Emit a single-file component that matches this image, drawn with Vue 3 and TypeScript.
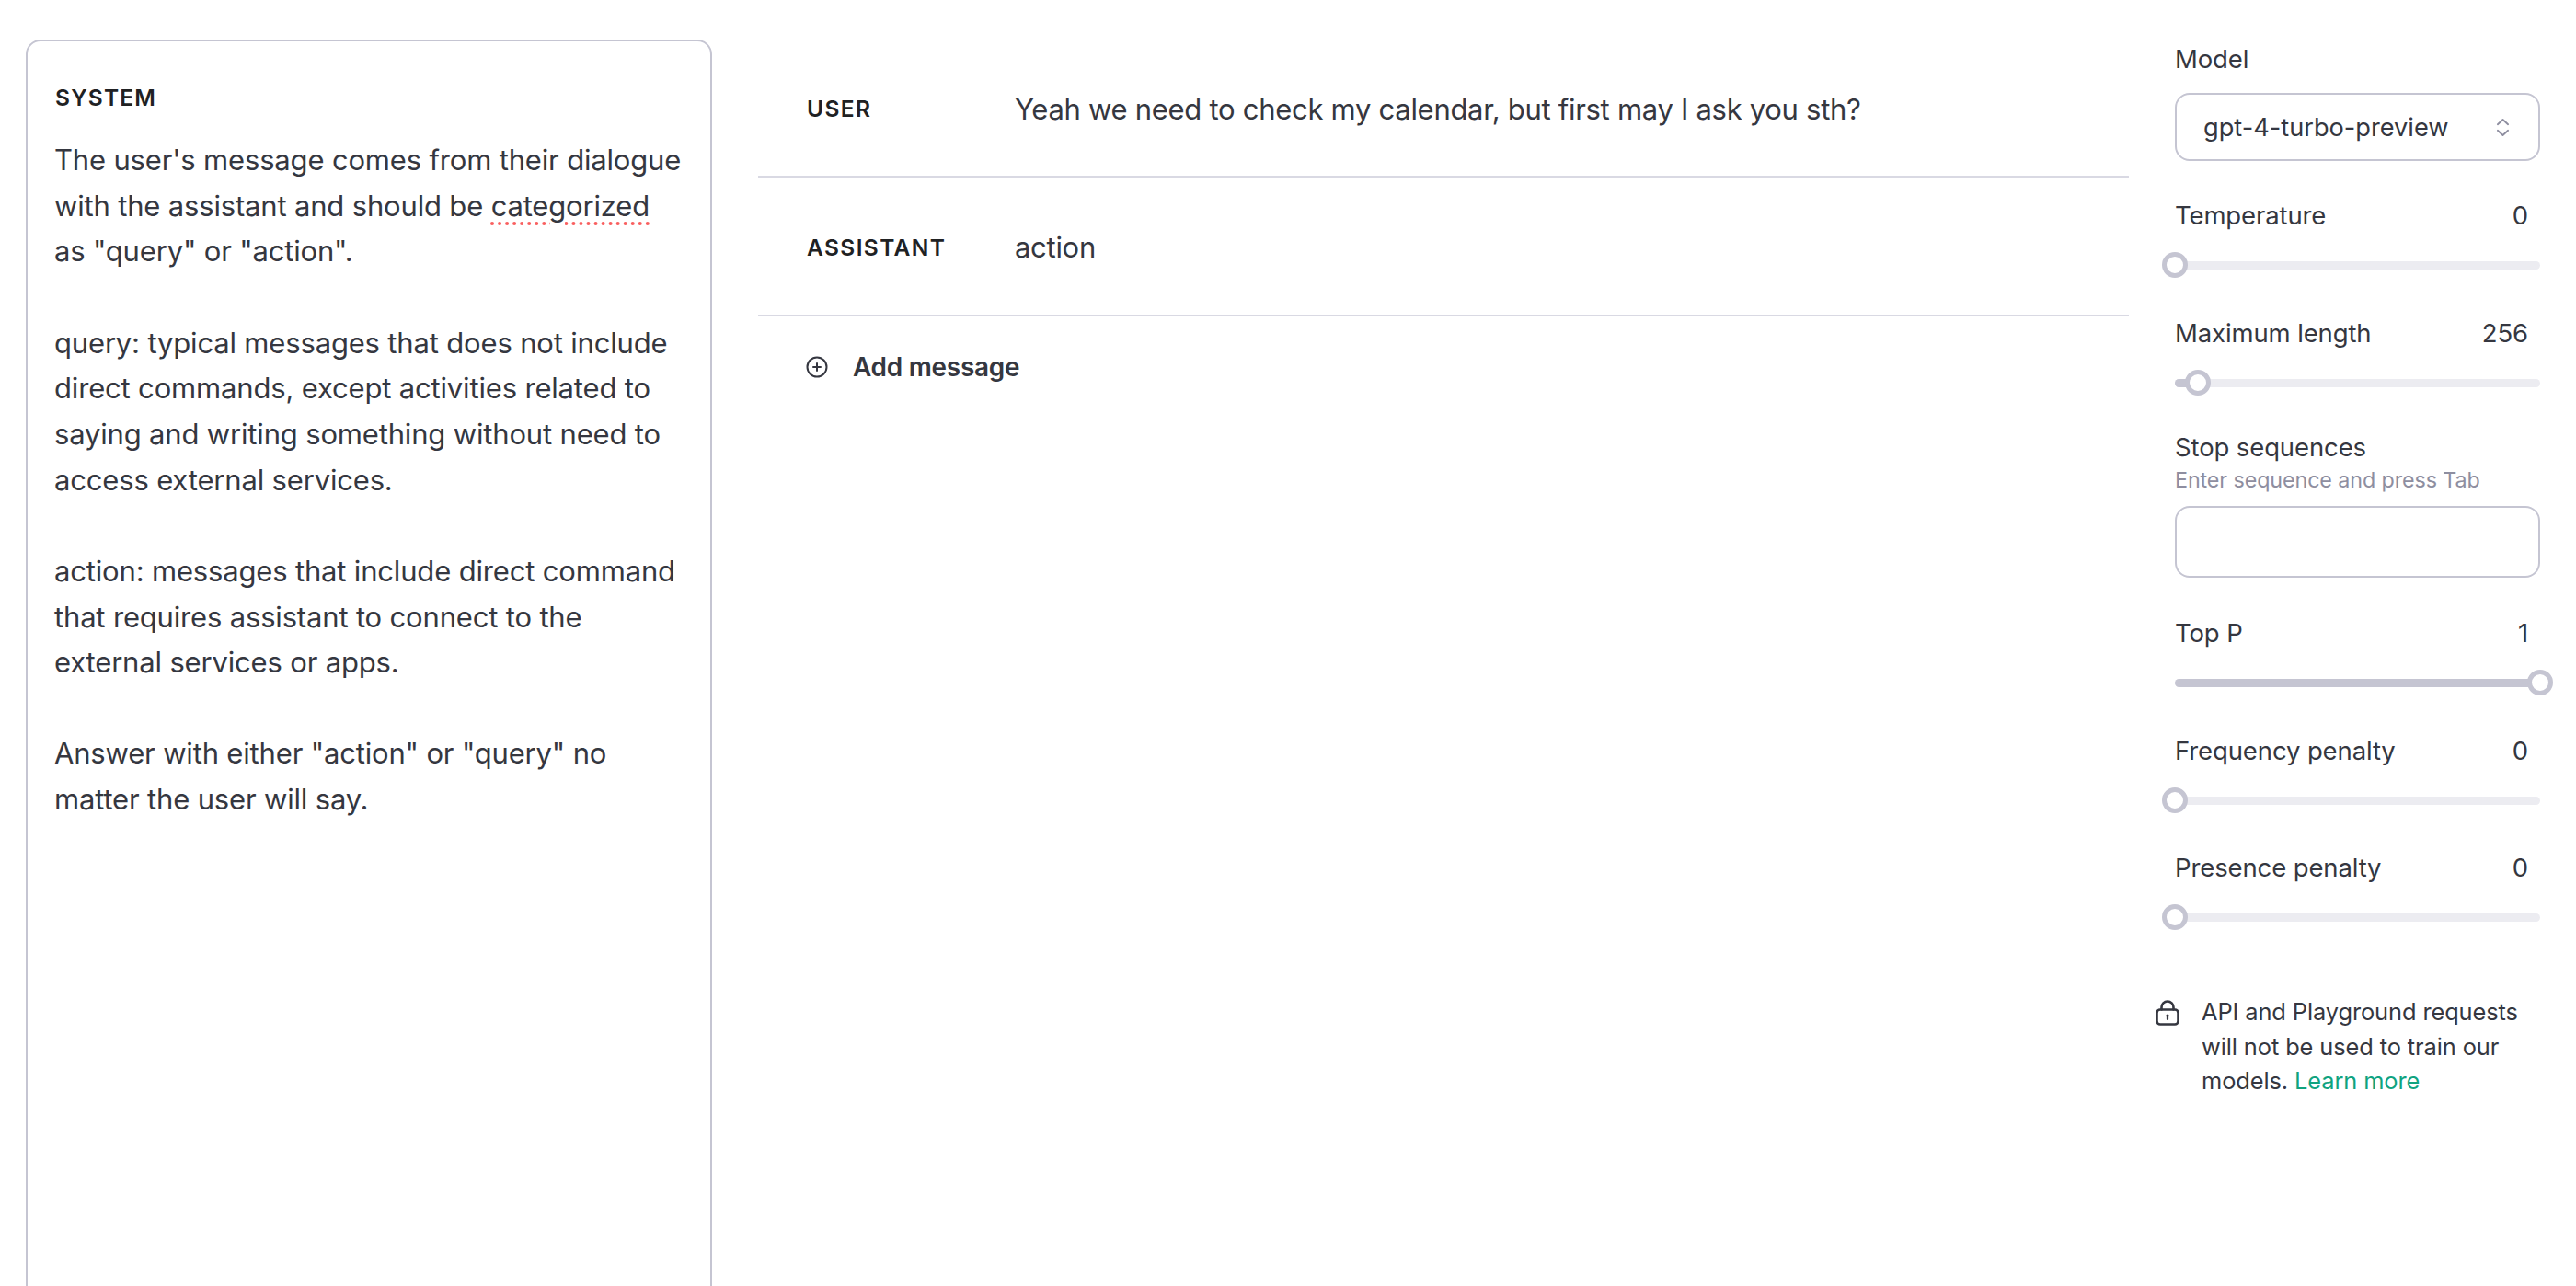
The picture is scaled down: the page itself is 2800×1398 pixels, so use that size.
<script setup lang="ts">
interface SliderRow {
  label: string
  value: string
  percent: number
  cls: string
}
const topSliders: SliderRow[] = [
  { label: 'Temperature', value: '0', percent: 0, cls: 'first' },
  { label: 'Maximum length', value: '256', percent: 6.3, cls: '' },
]
const bottomSliders: SliderRow[] = [
  { label: 'Top P', value: '1', percent: 100, cls: '' },
  { label: 'Frequency penalty', value: '0', percent: 0, cls: '' },
  { label: 'Presence penalty', value: '0', percent: 0, cls: 'tight' },
]
</script>

<template>
  <div class="page">
    <section class="system">
      <h2 class="system-title">SYSTEM</h2>
      <div class="system-text">
        <p>The user's message comes from their dialogue with the assistant and should be <span class="spell">categorized</span> as "query" or "action".</p>
        <p>query: typical messages that does not include direct commands, except activities related to saying and writing something without need to access external services.</p>
        <p>action: messages that include direct command that requires assistant to connect to the external services or apps.</p>
        <p>Answer with either "action" or "query" no matter the user will say.</p>
      </div>
    </section>

    <main class="chat">
      <div class="msg">
        <span class="role">USER</span>
        <span class="msg-text">Yeah we need to check my calendar, but first may I ask you sth?</span>
      </div>
      <div class="msg">
        <span class="role">ASSISTANT</span>
        <span class="msg-text">action</span>
      </div>
      <div class="add">
        <svg class="add-icon" viewBox="0 0 24 24" fill="none" stroke="#353740" stroke-width="2" stroke-linecap="round">
          <circle cx="12" cy="12" r="10.5" />
          <path d="M12 8v8M8 12h8" />
        </svg>
        <span>Add message</span>
      </div>
    </main>

    <aside class="side">
      <div class="label model-label">Model</div>
      <div class="select">
        <span>gpt-4-turbo-preview</span>
        <svg class="chev" viewBox="0 0 16 22" fill="none" stroke="#8e8ea0" stroke-width="2" stroke-linecap="round" stroke-linejoin="round">
          <path d="M2 7.5 8 2l6 5.5M2 14.5 8 20l6-5.5" />
        </svg>
      </div>

      <div v-for="s in topSliders" :key="s.label" class="slider-block" :class="s.cls">
        <div class="label row"><span>{{ s.label }}</span><span class="val">{{ s.value }}</span></div>
        <div class="slider">
          <div class="track"><div class="fill" :style="{ width: s.percent + '%' }"></div></div>
          <div class="thumb" :style="{ left: s.percent + '%' }"></div>
        </div>
      </div>

      <div class="stop">
        <div class="label">Stop sequences</div>
        <div class="hint">Enter sequence and press Tab</div>
        <div class="input"></div>
      </div>

      <div v-for="s in bottomSliders" :key="s.label" class="slider-block" :class="s.cls">
        <div class="label row"><span>{{ s.label }}</span><span class="val">{{ s.value }}</span></div>
        <div class="slider">
          <div class="track"><div class="fill" :style="{ width: s.percent + '%' }"></div></div>
          <div class="thumb" :style="{ left: s.percent + '%' }"></div>
        </div>
      </div>

      <div class="info">
        <svg class="lock" viewBox="0 0 26 28" fill="none" stroke="#353740" stroke-width="2.6" stroke-linecap="round" stroke-linejoin="round">
          <rect x="1.5" y="10.5" width="23" height="16" rx="3.5" />
          <path d="M6.5 10.5V8a6.5 6.5 0 0 1 13 0v2.5" />
          <circle cx="13" cy="17" r="1.6" fill="#353740" stroke="none" />
          <path d="M13 17.5v3.5" stroke-width="2.2" />
        </svg>
        <p>API and Playground requests will not be used to train our models. <span class="link">Learn more</span></p>
      </div>
    </aside>
  </div>
</template>

<style>
html, body { margin: 0; overflow: hidden; background: #fff; }
</style>

<style scoped>
.page {
  display: flex;
  width: 2800px;
  height: 1398px;
  overflow: hidden;
  background: #fff;
  font-family: Inter, "Liberation Sans", sans-serif;
  color: #353740;
}
.system {
  flex: none;
  box-sizing: border-box;
  width: 746px;
  height: 1420px;
  margin: 43px 0 0 28px;
  padding: 43px 28px 0 29px;
  border: 2px solid #c5c5d2;
  border-radius: 16px;
}
.system-title {
  margin: 0 0 0 1px;
  font-size: 24.5px;
  line-height: 36px;
  font-weight: 600;
  letter-spacing: 1.2px;
  color: #202123;
}
.system-text {
  margin-top: 25px;
  font-size: 31px;
  line-height: 49.65px;
  letter-spacing: -0.17px;
}
.system-text p { margin: 0 0 49.65px; }
.spell {
  text-decoration: underline dotted #f95f5f 4px;
  text-underline-offset: 7px;
}
.chat {
  flex: none;
  width: 1490px;
  margin-left: 50px;
  margin-top: 43px;
}
.msg {
  display: flex;
  align-items: center;
  height: 150px;
  padding: 2px 0 0 53px;
  border-bottom: 2px solid #d9d9e3;
  box-sizing: border-box;
}
.msg + .msg { height: 151px; }
.role {
  width: 226px;
  flex: none;
  font-size: 24.5px;
  font-weight: 600;
  letter-spacing: 1.4px;
  color: #202123;
}
.msg-text {
  font-size: 31px;
  letter-spacing: -0.29px;
}
.add {
  display: flex;
  align-items: center;
  padding-left: 52px;
  margin-top: 37px;
  gap: 27px;
  font-size: 27.9px;
  line-height: 36px;
  font-weight: 600;
  letter-spacing: -0.25px;
}
.add-icon { width: 24px; height: 24px; flex: none; }
.side {
  flex: none;
  width: 397px;
  margin-left: 50px;
  padding-top: 44px;
}
.label {
  font-size: 27.5px;
  line-height: 40px;
  letter-spacing: -0.12px;
}
.row { display: flex; justify-content: space-between; padding-right: 13px; }
.select {
  box-sizing: border-box;
  display: flex;
  align-items: center;
  justify-content: space-between;
  height: 74px;
  margin-top: 17px;
  padding: 0 31px 0 29px;
  border: 2px solid #c5c5d2;
  border-radius: 16px;
  font-size: 27.2px;
}
.chev { width: 15px; height: 21px; flex: none; }
.slider-block { margin-top: 40px; }
.slider-block.first { margin-top: 39px; }
.slider-block.tight { margin-top: 39px; }
.slider {
  position: relative;
  height: 28px;
  margin-top: 20px;
}
.track {
  position: absolute;
  left: 0;
  right: 0;
  top: 10px;
  height: 9px;
  border-radius: 5px;
  background: #ececf1;
  overflow: hidden;
}
.fill { height: 100%; background: #c5c5d2; }
.thumb {
  position: absolute;
  top: 0;
  box-sizing: border-box;
  width: 28px;
  height: 28px;
  margin-left: -14px;
  border: 5px solid #c5c5d2;
  border-radius: 50%;
  background: #fff;
}
.stop { margin-top: 36px; }
.hint {
  font-size: 23.3px;
  line-height: 32px;
  color: #8e8ea0;
  letter-spacing: -0.1px;
}
.input {
  box-sizing: border-box;
  height: 78px;
  margin-top: 12px;
  border: 2px solid #c5c5d2;
  border-radius: 16px;
}
.info {
  position: relative;
  margin-top: 70px;
  font-size: 25.4px;
  line-height: 37.5px;
  letter-spacing: -0.1px;
  padding-left: 29px;
}
.info p { margin: 0; }
.lock {
  position: absolute;
  left: -21px;
  top: 6px;
  width: 26px;
  height: 28px;
}
.link { color: #10a37f; }
</style>
